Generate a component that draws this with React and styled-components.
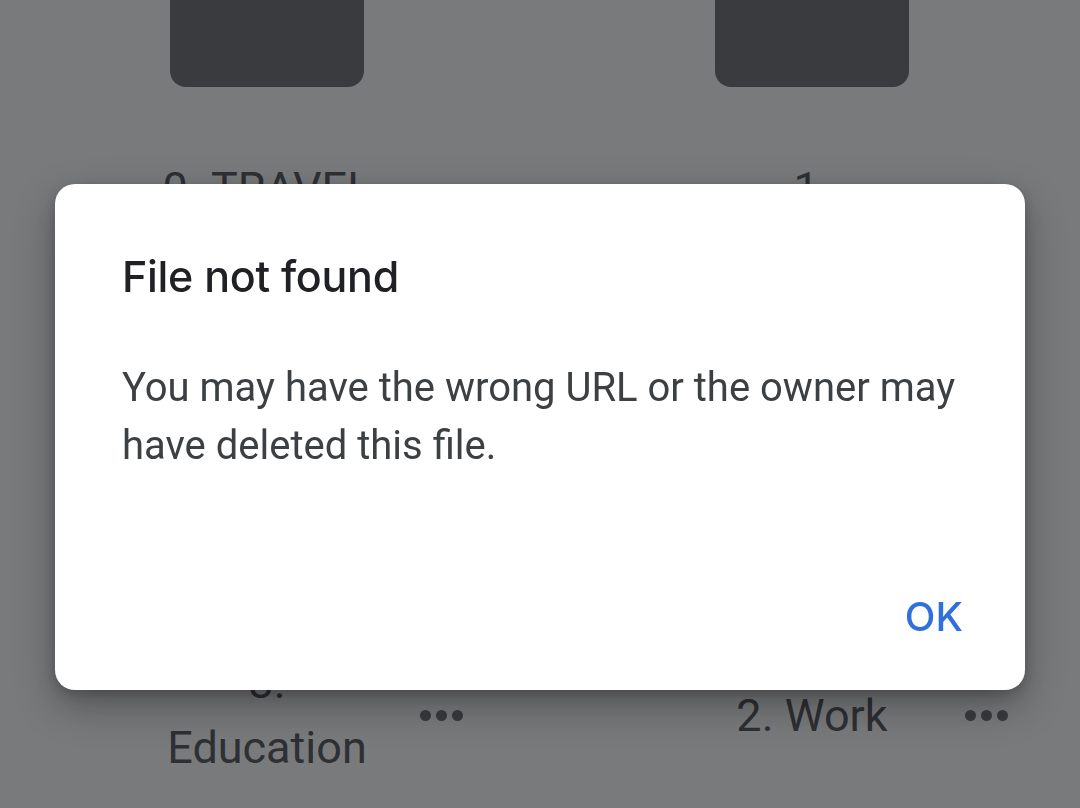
import React from "react";
import styled, { createGlobalStyle } from "styled-components";

const Global = createGlobalStyle`
  html, body { margin: 0; padding: 0; background: #ffffff; }
  body { width: 1080px; height: 808px; overflow: hidden; font-family: Roboto, "Noto Sans", sans-serif; }
`;

const Page = styled.div`
  width: 1080px;
  height: 808px;
  overflow: hidden;
  background: #ffffff;
`;

const Grid = styled.div`
  display: grid;
  grid-template-columns: 301px 301px;
  column-gap: 244px;
  row-gap: 101px;
  padding-left: 162px;
  margin-top: -107px;
`;

const Cell = styled.div`
  display: grid;
  grid-template-columns: 210px 43px;
  column-gap: 48px;
  grid-template-rows: 194px 130px;
  row-gap: 69px;
  align-items: center;
`;

const Tile = styled.div`
  grid-column: 1;
  grid-row: 1;
  justify-self: center;
  width: 194px;
  height: 194px;
  border-radius: 16px;
  background: #5f6368;
`;

const Label = styled.div`
  grid-column: 1;
  grid-row: 2;
  font-family: Roboto, sans-serif;
  font-size: 45px;
  line-height: 65px;
  color: #444649;
  text-align: center;
`;

const More = styled.svg`
  grid-column: 2;
  grid-row: 2;
  display: block;
  width: 43px;
  height: 11px;
  fill: #616366;
`;

const Scrim = styled.div`
  position: fixed;
  inset: 0;
  background: rgba(32, 33, 36, 0.6);
`;

const Dialog = styled.div`
  position: fixed;
  top: 184px;
  left: 55px;
  width: 970px;
  height: 506px;
  box-sizing: border-box;
  background: #ffffff;
  border-radius: 20px;
  padding: 67px 62px 48px 67px;
  display: flex;
  flex-direction: column;
  box-shadow: 0 16px 40px rgba(0, 0, 0, 0.32), 0 4px 12px rgba(0, 0, 0, 0.18);
`;

const Title = styled.h2`
  margin: 0;
  font-family: Inter, "Open Sans", sans-serif;
  font-weight: 500;
  font-size: 43px;
  line-height: 50px;
  letter-spacing: -0.3px;
  color: #202124;
`;

const Body = styled.p`
  margin: 58px 0 0;
  font-family: Roboto, sans-serif;
  font-size: 40px;
  line-height: 58px;
  color: #3c4043;
`;

const Footer = styled.div`
  margin-top: auto;
  display: flex;
  justify-content: flex-end;
`;

const TextButton = styled.button`
  border: 0;
  background: transparent;
  padding: 0;
  font-family: Inter, "Open Sans", sans-serif;
  font-weight: 500;
  font-size: 40px;
  line-height: 50px;
  color: #3170db;
  cursor: pointer;
`;

const folders = [
  { name: "0.\u00A0TRAVEL PLANS" },
  { name: "1. Personal" },
  { name: "3. Education" },
  { name: "2. Work" },
];

function MoreIcon() {
  return (
    <More viewBox="0 0 43 11" aria-hidden="true">
      <circle cx="5.5" cy="5.5" r="5.5" />
      <circle cx="21.5" cy="5.5" r="5.5" />
      <circle cx="37.5" cy="5.5" r="5.5" />
    </More>
  );
}

export default function App() {
  return (
    <>
      <Global />
      <Page>
        <Grid>
          {folders.map((f) => (
            <Cell key={f.name}>
              <Tile />
              <Label>{f.name}</Label>
              <MoreIcon />
            </Cell>
          ))}
        </Grid>
      </Page>
      <Scrim />
      <Dialog role="dialog">
        <Title>File not found</Title>
        <Body>
          You may have the wrong URL or the owner may have deleted this file.
        </Body>
        <Footer>
          <TextButton>OK</TextButton>
        </Footer>
      </Dialog>
    </>
  );
}
